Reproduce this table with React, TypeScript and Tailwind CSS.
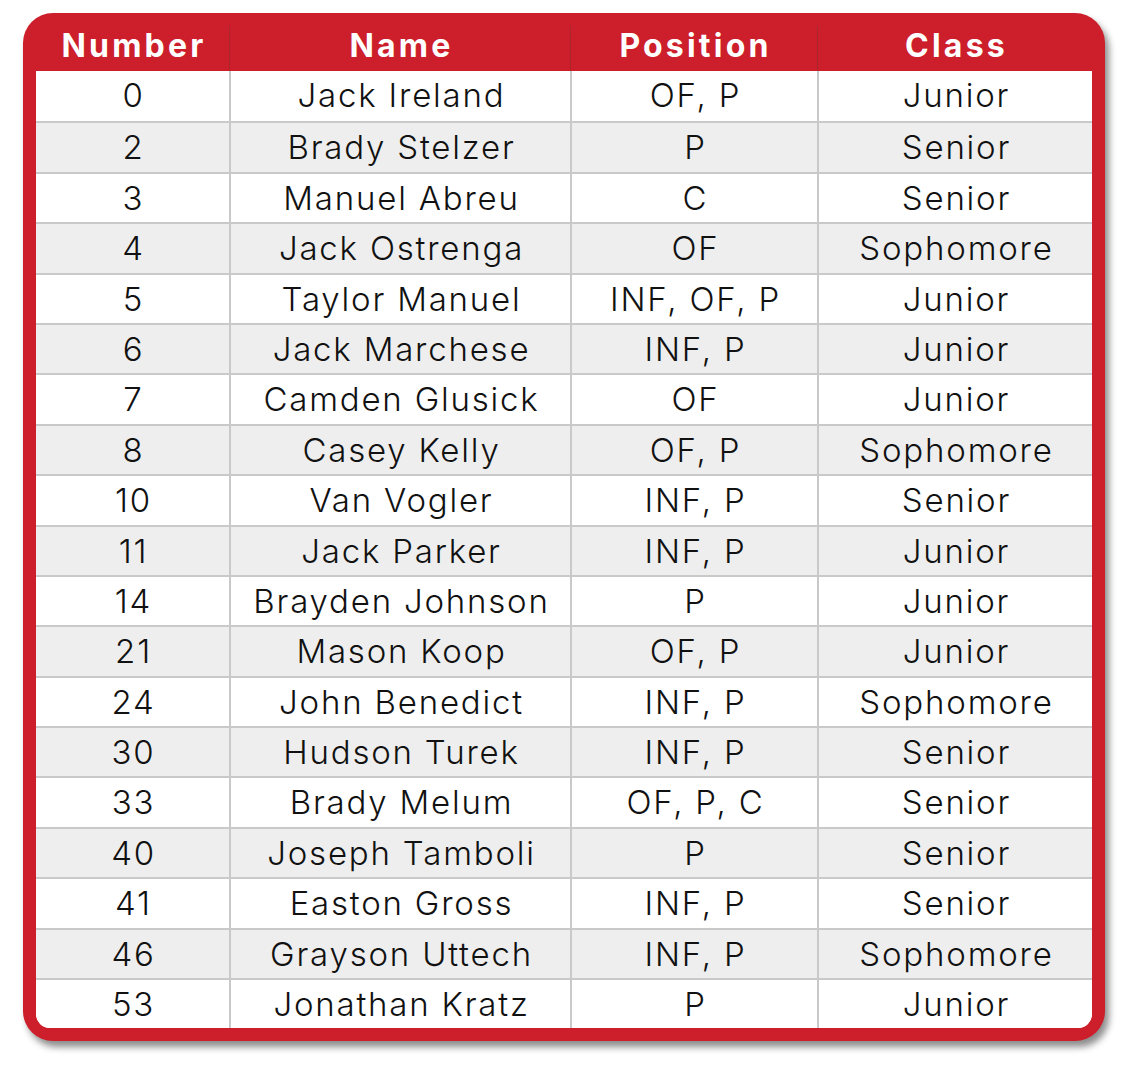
const players = [
  ["0", "Jack Ireland", "OF, P", "Junior"],
  ["2", "Brady Stelzer", "P", "Senior"],
  ["3", "Manuel Abreu", "C", "Senior"],
  ["4", "Jack Ostrenga", "OF", "Sophomore"],
  ["5", "Taylor Manuel", "INF, OF, P", "Junior"],
  ["6", "Jack Marchese", "INF, P", "Junior"],
  ["7", "Camden Glusick", "OF", "Junior"],
  ["8", "Casey Kelly", "OF, P", "Sophomore"],
  ["10", "Van Vogler", "INF, P", "Senior"],
  ["11", "Jack Parker", "INF, P", "Junior"],
  ["14", "Brayden Johnson", "P", "Junior"],
  ["21", "Mason Koop", "OF, P", "Junior"],
  ["24", "John Benedict", "INF, P", "Sophomore"],
  ["30", "Hudson Turek", "INF, P", "Senior"],
  ["33", "Brady Melum", "OF, P, C", "Senior"],
  ["40", "Joseph Tamboli", "P", "Senior"],
  ["41", "Easton Gross", "INF, P", "Senior"],
  ["46", "Grayson Uttech", "INF, P", "Sophomore"],
  ["53", "Jonathan Kratz", "P", "Junior"],
];

const headers = ["Number", "Name", "Position", "Class"];

export default function App() {
  return (
    <div className="min-h-[1074px] bg-white pt-[13px] pl-[23px] font-['Inter',sans-serif]">
      <div className="w-[1082px] rounded-[30px] bg-[#cd1f2b] px-[13px] pb-[13px] shadow-[4px_6px_7px_rgba(0,0,0,0.45)]">
        {/* header */}
        <div className="grid h-[58px] grid-cols-[193px_341px_247px_275px]">
          {headers.map((h, i) => (
            <div
              key={h}
              className={`mt-[13px] flex items-center justify-center pb-[6px] pl-[3px] text-[32px] leading-none font-bold tracking-[3.2px] text-white ${
                i > 0 ? "border-l border-[#a8262c]" : ""
              }`}
            >
              {h}
            </div>
          ))}
        </div>

        {/* rows */}
        <div className="overflow-hidden rounded-b-[14px] bg-white">
          {players.map((p, r) => (
            <div
              key={p[0]}
              className={`grid h-[50.4px] grid-cols-[193px_341px_247px_275px] ${
                r > 0 ? "border-t-2 border-[#c9c9c9]" : ""
              } ${r % 2 === 1 ? "bg-[#eeeeee]" : "bg-white"}`}
            >
              {p.map((cell, i) => (
                <div
                  key={i}
                  className={`flex items-center justify-center pl-[2px] text-[33px] font-light tracking-[1.8px] text-[#111111] ${
                    i > 0 ? "border-l-2 border-[#c9c9c9]" : ""
                  }`}
                >
                  {cell}
                </div>
              ))}
            </div>
          ))}
        </div>
      </div>
    </div>
  );
}
